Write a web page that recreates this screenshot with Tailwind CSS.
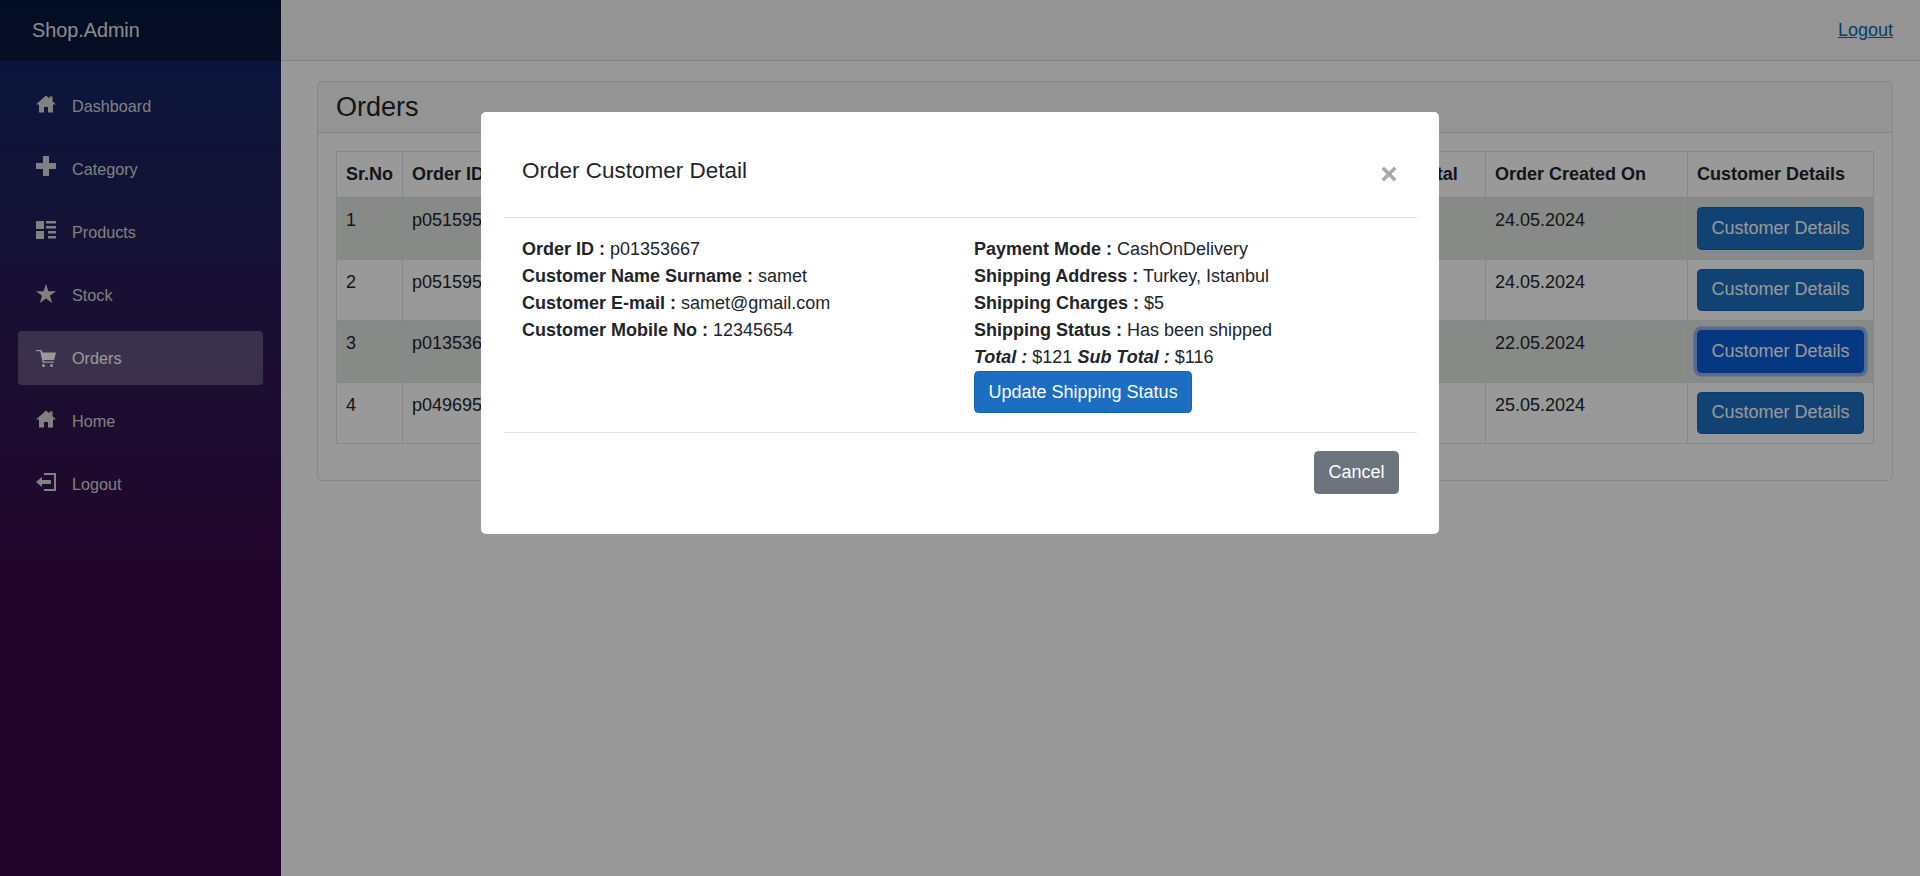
<!DOCTYPE html>
<html lang="en">
<head>
    <meta charset="UTF-8">
    <title>Shop.Admin</title>
    <script src="https://cdn.jsdelivr.net/npm/@tailwindcss/browser@4"></script>
</head>
<body class="h-screen overflow-hidden bg-white text-[#212529] text-[18px] leading-[27px] font-['Liberation_Sans',Arial,sans-serif]">

<div class="flex h-full">
    <!-- Sidebar -->
    <aside class="w-[281px] shrink-0 h-full bg-linear-to-b from-[#052767] to-[#3a0647] to-70%">
        <div class="h-[61px] bg-black/40 flex items-center pl-[32px] text-[19.8px] text-white/90">Shop.Admin</div>
        <nav class="pt-[18px] px-[18px] flex flex-col gap-[9px] text-[16.2px] text-[#d7d7d7]">
            <a class="h-[54px] rounded-[4px] flex items-center pl-[18px]">
                <svg class="w-5 h-5 mr-4 -mt-[2px] shrink-0" viewBox="0 0 20 20" fill="currentColor"><path d="M10 .5 0 9.500h3v8h5V12h4v5.500h5v-8h3l-3.500-3.200V1.500h-3v2.100z"/></svg>
                Dashboard
            </a>
            <a class="h-[54px] rounded-[4px] flex items-center pl-[18px]">
                <svg class="w-5 h-5 mr-4 -mt-[6px] shrink-0" viewBox="0 0 20 20" fill="currentColor"><path d="M7 0h6v7h7v6h-7v7H7v-7H0V7h7z"/></svg>
                Category
            </a>
            <a class="h-[54px] rounded-[4px] flex items-center pl-[18px]">
                <svg class="w-5 h-5 mr-4 -mt-[4px] shrink-0" viewBox="0 0 20 20" fill="currentColor"><path d="M0 1h8v8H0zM0 11h8v8H0zM10 1h10v2.500H10zM10 6h10v2.500H10zM12 11h8v2.500h-8zM12 16h8v2.500h-8z"/></svg>
                Products
            </a>
            <a class="h-[54px] rounded-[4px] flex items-center pl-[18px]">
                <svg class="w-5 h-5 mr-4 -mt-[3px] shrink-0" viewBox="0 0 20 20" fill="currentColor"><path d="M10 0l2.400 7.200H20l-6.100 4.500 2.300 7.300L10 14.500 3.800 19l2.300-7.300L0 7.200h7.600z"/></svg>
                Stock
            </a>
            <a class="h-[54px] rounded-[4px] flex items-center pl-[18px] bg-white/25 text-white">
                <svg class="w-5 h-5 mr-4 shrink-0" viewBox="0 0 20 20" fill="currentColor"><path d="M0 2h5.500l1 2.500H20l-1.800 7.500H7.500l.4 1.500h10v1.200H6.700L4.300 3.300H0zM7.500 16a1.500 1.500 0 1 1 0 3 1.500 1.500 0 0 1 0-3zM15.500 16a1.500 1.500 0 1 1 0 3 1.500 1.500 0 0 1 0-3z"/></svg>
                Orders
            </a>
            <a class="h-[54px] rounded-[4px] flex items-center pl-[18px]">
                <svg class="w-5 h-5 mr-4 -mt-[2px] shrink-0" viewBox="0 0 20 20" fill="currentColor"><path d="M10 .5 0 9.500h3v8h5V12h4v5.500h5v-8h3l-3.500-3.200V1.500h-3v2.100z"/></svg>
                Home
            </a>
            <a class="h-[54px] rounded-[4px] flex items-center pl-[18px]">
                <svg class="w-5 h-5 mr-4 -mt-[4px] shrink-0" viewBox="0 0 20 20" fill="currentColor"><path d="M8 1h12v18H8v-2h10V3H8zM0 10l6-5v3h9v4H6v3z"/></svg>
                Logout
            </a>
        </nav>
    </aside>

    <!-- Main -->
    <main class="flex-1 min-w-0">
        <div class="h-[61px] bg-[#f7f7f7] border-b border-[#d6d5d5] flex items-center justify-end pr-[27px]">
            <a class="text-[#006bb7] underline">Logout</a>
        </div>
        <div class="pt-[20px] pl-[36px] pr-[27px]">
            <div class="border border-black/12 rounded-[5px]">
                <div class="h-[51px] bg-black/3 border-b border-black/12 flex items-center pl-[18px] text-[27px] leading-[32px]">Orders</div>
                <div class="p-[18px]">
                    <table class="w-full table-fixed border-collapse mb-[18px]">
                        <colgroup>
                            <col class="w-[66px]">
                            <col>
                            <col class="w-[79px]">
                            <col class="w-[202px]">
                            <col class="w-[186px]">
                        </colgroup>
                        <thead>
                            <tr class="text-left">
                                <th class="border border-[#dee2e6] p-[9px] align-top whitespace-nowrap">Sr.No</th>
                                <th class="border border-[#dee2e6] p-[9px] align-top">Order ID</th>
                                <th class="border border-[#dee2e6] p-[9px] align-top">Total</th>
                                <th class="border border-[#dee2e6] p-[9px] align-top">Order Created On</th>
                                <th class="border border-[#dee2e6] p-[9px] align-top">Customer Details</th>
                            </tr>
                        </thead>
                        <tbody>
                            <tr class="bg-[#e3e6e3]">
                                <td class="border border-[#dee2e6] p-[9px] align-top">1</td>
                                <td class="border border-[#dee2e6] p-[9px] align-top">p05159530</td>
                                <td class="border border-[#dee2e6] p-[9px] align-top"></td>
                                <td class="border border-[#dee2e6] p-[9px] align-top">24.05.2024</td>
                                <td class="border border-[#dee2e6] p-[9px] align-top"><button class="block px-[13.5px] py-[6.75px] text-white bg-[#1b6ec2] border border-[#1861ac] rounded-[4.5px] whitespace-nowrap">Customer Details</button></td>
                            </tr>
                            <tr>
                                <td class="border border-[#dee2e6] p-[9px] align-top">2</td>
                                <td class="border border-[#dee2e6] p-[9px] align-top">p05159531</td>
                                <td class="border border-[#dee2e6] p-[9px] align-top"></td>
                                <td class="border border-[#dee2e6] p-[9px] align-top">24.05.2024</td>
                                <td class="border border-[#dee2e6] p-[9px] align-top"><button class="block px-[13.5px] py-[6.75px] text-white bg-[#1b6ec2] border border-[#1861ac] rounded-[4.5px] whitespace-nowrap">Customer Details</button></td>
                            </tr>
                            <tr class="bg-[#e3e6e3]">
                                <td class="border border-[#dee2e6] p-[9px] align-top">3</td>
                                <td class="border border-[#dee2e6] p-[9px] align-top">p01353667</td>
                                <td class="border border-[#dee2e6] p-[9px] align-top"></td>
                                <td class="border border-[#dee2e6] p-[9px] align-top">22.05.2024</td>
                                <td class="border border-[#dee2e6] p-[9px] align-top"><button class="block px-[13.5px] py-[6.75px] text-white bg-[#0b5ed7] border border-[#0a58ca] rounded-[4.5px] whitespace-nowrap shadow-[0_0_0_3.6px_rgba(49,132,253,0.5)]">Customer Details</button></td>
                            </tr>
                            <tr>
                                <td class="border border-[#dee2e6] p-[9px] align-top">4</td>
                                <td class="border border-[#dee2e6] p-[9px] align-top">p04969520</td>
                                <td class="border border-[#dee2e6] p-[9px] align-top"></td>
                                <td class="border border-[#dee2e6] p-[9px] align-top">25.05.2024</td>
                                <td class="border border-[#dee2e6] p-[9px] align-top"><button class="block px-[13.5px] py-[6.75px] text-white bg-[#1b6ec2] border border-[#1861ac] rounded-[4.5px] whitespace-nowrap">Customer Details</button></td>
                            </tr>
                        </tbody>
                    </table>
                </div>
            </div>
        </div>
    </main>
</div>

<!-- Modal -->
<div class="fixed inset-0 bg-black/40">
    <div class="w-[958px] mx-auto mt-[112px] bg-white rounded-[5px] pl-[23px] pr-[22px]">
        <div class="flex justify-between border-b border-[#dee2e6] px-[18px] pt-[42px] pb-[29px]">
            <h5 class="text-[22.5px] leading-[33.75px]">Order Customer Detail</h5>
            <svg class="w-4 h-4 mt-[12px] mr-[2px] text-[#aaaaaa]" viewBox="0 0 16 16" fill="currentColor"><path d="M3 .5 8 5.500l5-5L15.500 3l-5 5 5 5-2.500 2.500-5-5-5 5L.5 13l5-5-5-5z"/></svg>
        </div>
        <div class="grid grid-cols-[452px_1fr] px-[18px] pt-[18px] pb-[19px] border-b border-[#dee2e6]">
            <div>
                <div><b>Order ID :</b> p01353667</div>
                <div><b>Customer Name Surname :</b> samet</div>
                <div><b>Customer E-mail :</b> samet@gmail.com</div>
                <div><b>Customer Mobile No :</b> 12345654</div>
            </div>
            <div>
                <div><b>Payment Mode :</b> CashOnDelivery</div>
                <div><b>Shipping Address :</b> Turkey, Istanbul</div>
                <div><b>Shipping Charges :</b> $5</div>
                <div><b>Shipping Status :</b> Has been shipped</div>
                <div><b><i>Total :</i></b> $121 <b><i>Sub Total :</i></b> $116</div>
                <button class="block px-[13.5px] py-[6.75px] text-white bg-[#1b6ec2] border border-[#1861ac] rounded-[4.5px]">Update Shipping Status</button>
            </div>
        </div>
        <div class="flex justify-end px-[18px] pt-[18px] pb-[40px]">
            <button class="px-[13.5px] py-[6.75px] text-white bg-[#6c757d] border border-[#6c757d] rounded-[4.5px]">Cancel</button>
        </div>
    </div>
</div>

</body>
</html>
